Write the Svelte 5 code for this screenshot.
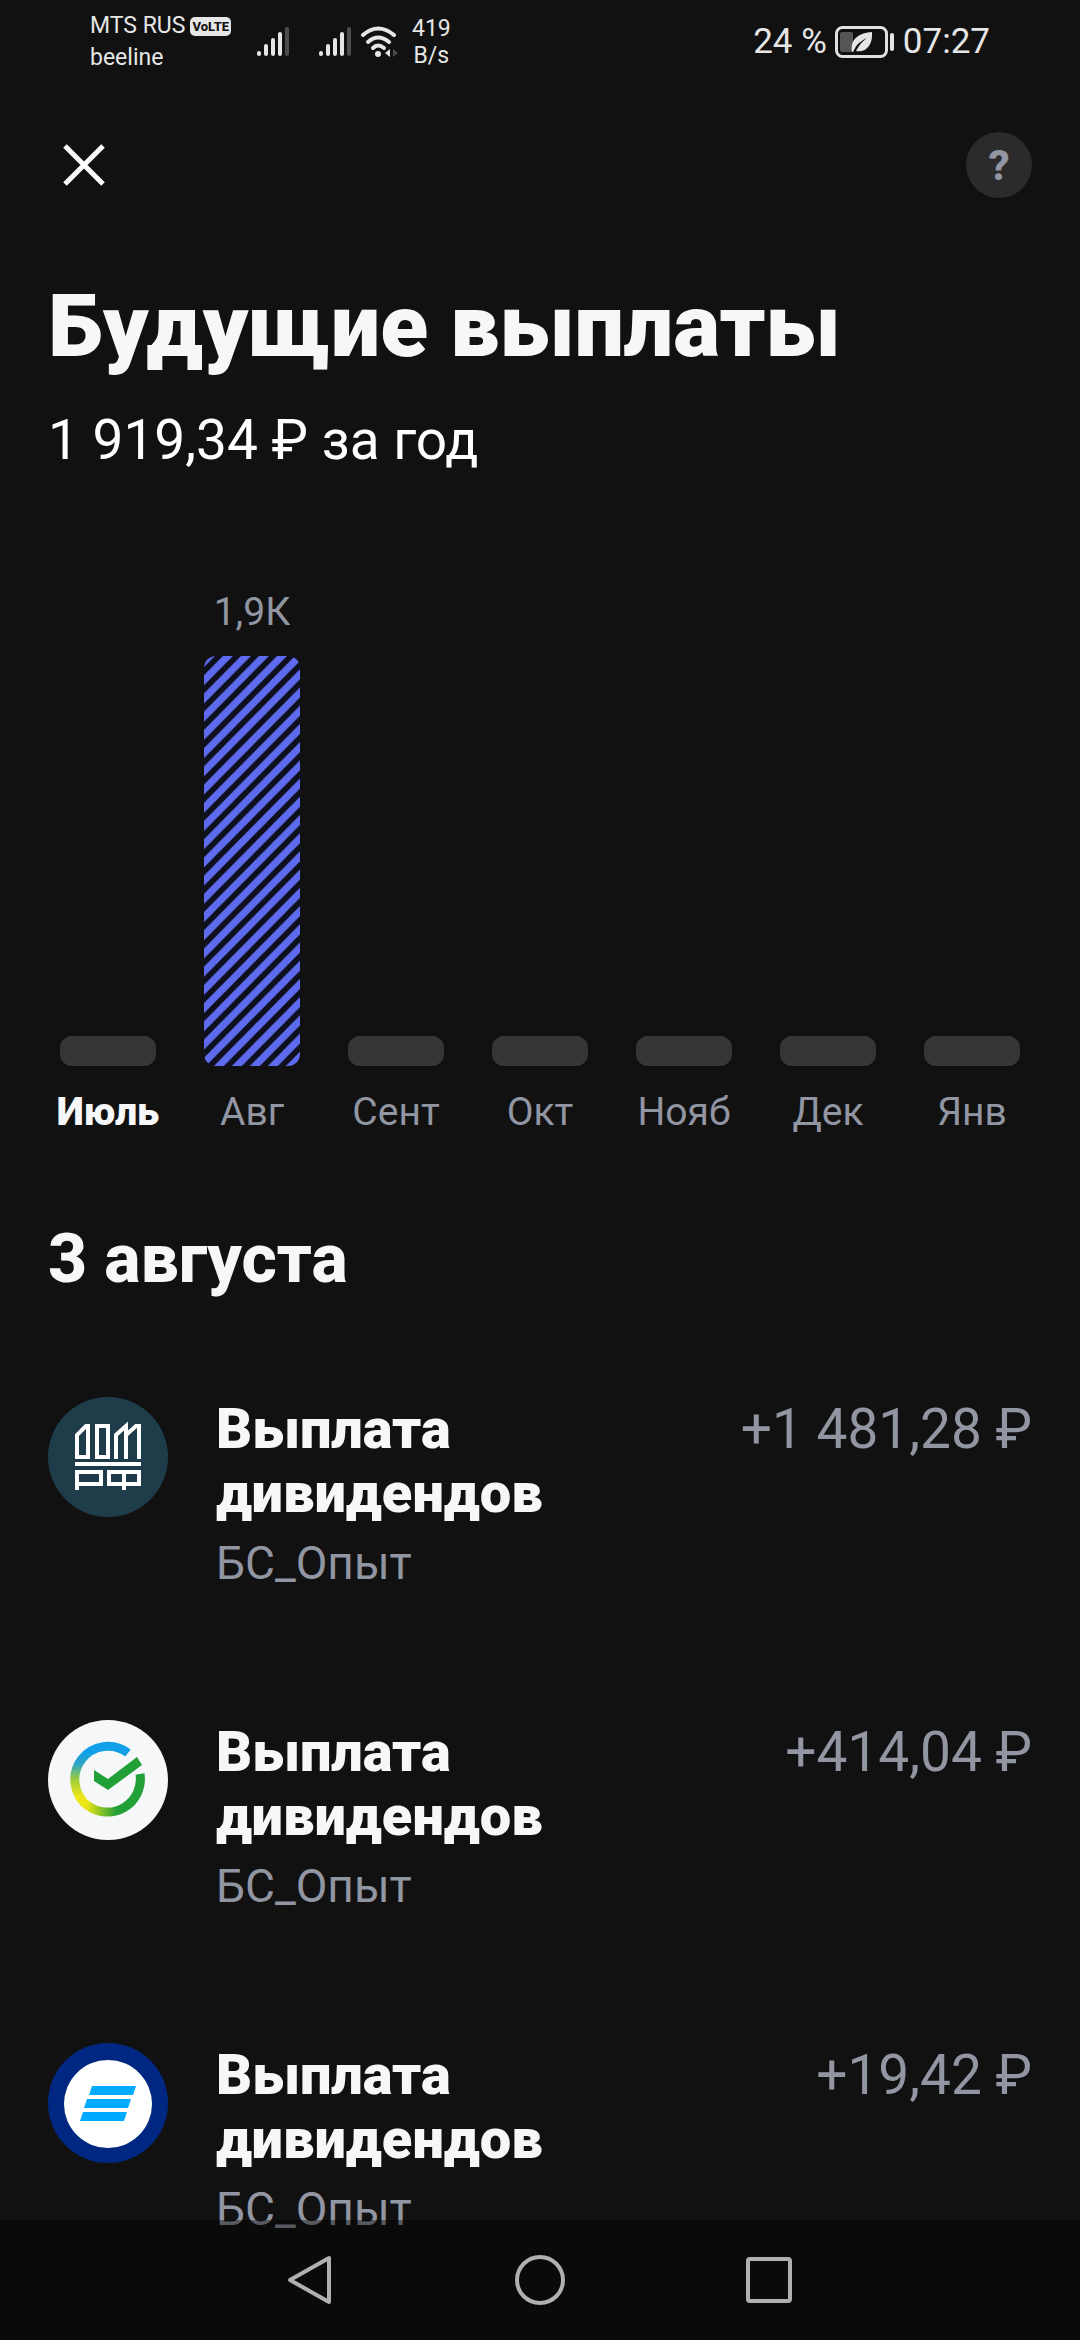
<script lang="ts">
	type Payout = { logo: string; title: string; account: string; amount: string };

	const months = [
		{ name: 'Июль', value: 0, label: '' },
		{ name: 'Авг', value: 410, label: '1,9К' },
		{ name: 'Сент', value: 0, label: '' },
		{ name: 'Окт', value: 0, label: '' },
		{ name: 'Нояб', value: 0, label: '' },
		{ name: 'Дек', value: 0, label: '' },
		{ name: 'Янв', value: 0, label: '' }
	];

	const payouts: Payout[] = [
		{ logo: 'domrf', title: 'Выплата дивидендов', account: 'БС_Опыт', amount: '+1 481,28 ₽' },
		{ logo: 'sber', title: 'Выплата дивидендов', account: 'БС_Опыт', amount: '+414,04 ₽' },
		{ logo: 'vtb', title: 'Выплата дивидендов', account: 'БС_Опыт', amount: '+19,42 ₽' }
	];

	let selected = $state(0);
</script>

{#snippet signal()}
	<svg class="signal" width="34" height="32" viewBox="0 0 34 32" aria-hidden="true">
		<g stroke="#e6e6e6" stroke-width="4" stroke-linecap="round">
			<path d="M3 27v1M10 20v8M17 14v14M24 8v20" />
			<path d="M31 3v25" stroke="#4c4c4c" />
		</g>
	</svg>
{/snippet}

<div class="screen">
	<div class="status">
		<div class="carriers">
			<div class="carrier">
				<span>MTS RUS</span>
				<span class="volte">VoLTE</span>
			</div>
			<div>beeline</div>
		</div>
		<div class="signals">
			{@render signal()}
			{@render signal()}
		</div>
		<svg class="wifi" width="40" height="34" viewBox="0 0 40 34" aria-hidden="true">
			<g fill="none" stroke="#e6e6e6" stroke-width="4" stroke-linecap="round">
				<path d="M3 10Q18-3 34 10" />
				<path d="M8 17Q18 8 29 17" />
				<path d="M13 23Q18 18 24 23" />
			</g>
			<circle cx="18" cy="29" r="3" fill="#e6e6e6" />
			<path d="M30 24v8l-5-4z" fill="#e6e6e6" />
			<path d="M33 24v8l5-4z" fill="#4c4c4c" />
		</svg>
		<div class="speed">
			<div>419</div>
			<div>B/s</div>
		</div>
		<div class="power">
			<span>24 %</span>
			<svg width="60" height="34" viewBox="0 0 60 34" aria-hidden="true">
				<rect x="1.5" y="2.5" width="50" height="29" rx="6" fill="none" stroke="#e0e0e0" stroke-width="3" />
				<rect x="5" y="7" width="13" height="20" rx="2" fill="#555" />
				<path d="M17 27C15 13 25 8 37 7C38 20 31 28 21 26Q25 18 32 13Q22 17 18 27z" fill="#e6e6e6" />
				<path d="M57 10v14" stroke="#e6e6e6" stroke-width="4" stroke-linecap="round" />
			</svg>
			<span>07:27</span>
		</div>
	</div>

	<header>
		<button class="close" aria-label="Закрыть">
			<svg width="48" height="48" viewBox="0 0 48 48">
				<path d="M5 5l38 38M43 5L5 43" stroke="#fff" stroke-width="5" />
			</svg>
		</button>
		<button class="help" aria-label="Помощь">?</button>
	</header>

	<main>
		<h1>Будущие выплаты</h1>
		<p class="total">1 919,34 ₽ за год</p>

		<div class="chart">
			{#each months as month, i}
				<button class="month" class:current={i === selected} onclick={() => (selected = i)}>
					<span class="value">{month.label}</span>
					{#if month.value}
						<svg class="bar" style="height: {month.value}px" aria-hidden="true">
							<defs>
								<pattern
									id="stripes"
									width="18"
									height="18"
									patternUnits="userSpaceOnUse"
									patternTransform="scale(1 1.012)"
								>
									<rect width="18" height="18" fill="#0e101e" />
									<path d="M-6 12L12-6M-6 30L30-6M6 36L36 6" stroke="#5f6bee" stroke-width="7" />
								</pattern>
							</defs>
							<rect width="100%" height="100%" fill="url(#stripes)" />
						</svg>
					{:else}
						<span class="bar empty"></span>
					{/if}
					<span class="name">{month.name}</span>
				</button>
			{/each}
		</div>

		<h2>3 августа</h2>

		<ul>
			{#each payouts as payout}
				<li>
					<svg class="logo" viewBox="0 0 120 120" aria-hidden="true">
						{#if payout.logo === 'domrf'}
							<circle cx="60" cy="60" r="60" fill="#1f3c4b" />
							<g fill="none" stroke="#fff" stroke-width="4">
								<path d="M29 60V38l9-9h2v31zM49 29h11v31H49zM68 62V38l10-9v33M78 38l10-9h3v33M78 33v29" />
								<path d="M27 67h66" />
								<path d="M29 93V75h24v12H29M91 75H61v12h30zM76 75v18" />
							</g>
						{:else if payout.logo === 'sber'}
							<defs>
								<linearGradient id="sber-left" x1="0" y1="0" x2="0" y2="1">
									<stop offset="0.1" stop-color="#109fe8" />
									<stop offset="0.3" stop-color="#2ea6c4" />
									<stop offset="0.55" stop-color="#9ccb3d" />
									<stop offset="0.85" stop-color="#eee718" />
								</linearGradient>
								<linearGradient id="sber-right" x1="0" y1="0" x2="1" y2="0">
									<stop offset="0" stop-color="#e8e516" />
									<stop offset="0.55" stop-color="#21a038" />
								</linearGradient>
							</defs>
							<circle cx="60" cy="60" r="60" fill="#f5f7f8" />
							<g fill="none" stroke-width="9">
								<path d="M40 86A33 33 0 1 1 80 33" stroke="url(#sber-left)" />
								<path d="M39 85A33 33 0 0 0 92 54" stroke="url(#sber-right)" />
							</g>
							<path d="M46 50l14 9 29-22 5 8-34 25-14-9z" fill="#21a038" />
						{:else}
							<circle cx="60" cy="60" r="60" fill="#002882" />
							<circle cx="60" cy="61" r="44" fill="#fff" />
							<path d="M44 43h44l-3 9H41zM39 56h44l-3 9H36zM35 69h44l-3 9H32z" fill="#00aaff" />
						{/if}
					</svg>
					<div class="info">
						<div class="title">{payout.title}</div>
						<div class="account">{payout.account}</div>
					</div>
					<div class="amount">{payout.amount}</div>
				</li>
			{/each}
		</ul>
	</main>

	<nav>
		<button aria-label="Назад">
			<svg width="56" height="56" viewBox="0 0 56 56">
				<path d="M46 6v44L7 28z" />
			</svg>
		</button>
		<button aria-label="Домой">
			<svg width="56" height="56" viewBox="0 0 56 56">
				<circle cx="28" cy="28" r="23" />
			</svg>
		</button>
		<button aria-label="Недавние">
			<svg width="56" height="56" viewBox="0 0 56 56">
				<rect x="7" y="7" width="42" height="42" rx="2" />
			</svg>
		</button>
	</nav>
</div>

<style>
	:global(body) {
		background: #111;
	}

	.screen {
		min-height: 100vh;
		background: #111;
		color: #f6f7f8;
		font-family: Roboto, 'Noto Sans', sans-serif;
	}

	button {
		padding: 0;
		border: none;
		background: none;
		color: inherit;
		font: inherit;
		cursor: pointer;
	}

	.status {
		display: flex;
		align-items: center;
		height: 84px;
		padding: 0 90px;
		color: #e6e6e6;
		font-size: 23px;
		line-height: 32px;
	}

	.carriers {
		width: 166px;
	}

	.carrier {
		display: flex;
		align-items: center;
		gap: 5px;
	}

	.volte {
		padding: 0 2px;
		border-radius: 5px;
		background: #e6e6e6;
		color: #111;
		font-size: 13px;
		font-weight: 800;
		line-height: 19px;
	}

	.signals {
		display: flex;
		gap: 28px;
	}

	.wifi {
		margin-left: 8px;
	}

	.speed {
		margin-left: 12px;
		line-height: 27px;
		text-align: center;
	}

	.power {
		display: flex;
		align-items: center;
		gap: 8px;
		margin-left: auto;
		font-size: 35px;
		font-weight: 450;
	}

	header {
		display: flex;
		justify-content: space-between;
		align-items: center;
		height: 162px;
		padding: 0 48px 0 60px;
	}

	.close,
	.close svg {
		display: block;
	}

	.help {
		width: 66px;
		height: 66px;
		border-radius: 50%;
		background: #2b2b2b;
		color: #9295a2;
		font-size: 42px;
		font-weight: 800;
	}

	main {
		padding: 0 48px;
	}

	h1 {
		margin: 0;
		padding-top: 26px;
		font-size: 88px;
		font-weight: 900;
		line-height: 108px;
	}

	.total {
		margin: 0;
		padding-top: 24px;
		color: #fff;
		font-size: 55px;
		font-weight: 450;
		line-height: 72px;
	}

	.chart {
		display: grid;
		grid-template-columns: repeat(7, 1fr);
		margin: 112px -12px 0;
		color: #9295a2;
		font-size: 39px;
		line-height: 48px;
	}

	.month {
		display: flex;
		flex-direction: column;
		align-items: center;
		justify-content: flex-end;
		font-weight: 450;
	}

	.bar {
		display: block;
		width: 67%;
		margin: 20px 0 22px;
		border-radius: 12px;
	}

	.empty {
		height: 30px;
		background: #363636;
	}

	.current .name {
		color: #f6f7f8;
		font-weight: 900;
	}

	h2 {
		margin: 0;
		padding-top: 81px;
		font-size: 68px;
		font-weight: 800;
		line-height: 84px;
	}

	ul {
		display: flex;
		flex-direction: column;
		gap: 127px;
		margin: 0;
		padding: 96px 0 0;
		list-style: none;
	}

	li {
		display: grid;
		grid-template-columns: 120px 360px 1fr;
		column-gap: 48px;
	}

	.logo {
		width: 120px;
		height: 120px;
	}

	.title {
		font-size: 56px;
		font-weight: 900;
		line-height: 64px;
	}

	.account {
		padding-top: 8px;
		color: #9295a2;
		font-size: 46px;
		font-weight: 450;
		line-height: 60px;
	}

	.amount {
		color: #9295a2;
		font-size: 55px;
		font-weight: 450;
		line-height: 64px;
		text-align: right;
		white-space: nowrap;
	}

	nav {
		position: fixed;
		right: 0;
		bottom: 0;
		left: 0;
		display: flex;
		justify-content: center;
		gap: 173px;
		height: 120px;
		background: rgba(0, 0, 0, 0.4);
	}

	nav svg {
		display: block;
		fill: none;
		stroke: #b0b0b0;
		stroke-width: 4;
		stroke-linejoin: round;
	}
</style>
